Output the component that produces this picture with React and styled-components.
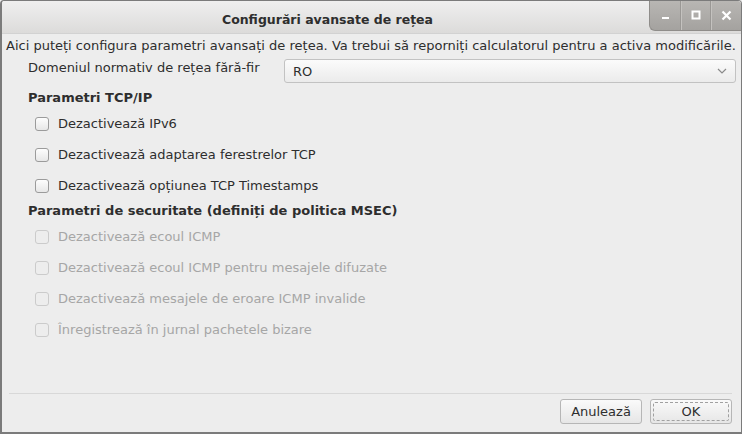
import React from "react";
import styled, { createGlobalStyle } from "styled-components";

const Global = createGlobalStyle`
  html, body { margin: 0; padding: 0; background: #ededed; }
  body { font-family: "DejaVu Sans", "Noto Sans", sans-serif; font-size: 13px; color: #2e3436; }
  * { box-sizing: border-box; }
`;

const Window = styled.div`
  width: 742px;
  height: 434px;
  display: flex;
  flex-direction: column;
  background: #ededed;
  border: 1px solid #7b7b7b;
  border-left-width: 2px;
  border-bottom-width: 2px;
  border-radius: 4px 4px 0 0;
  overflow: hidden;
`;

const TitleBar = styled.div`
  height: 33px;
  display: flex;
  align-items: flex-start;
  background: linear-gradient(#efefef, #dcdbda);
  border-bottom: 1px solid #d2d2d2;
  flex-shrink: 0;
`;

const Title = styled.div`
  flex: 1;
  height: 33px;
  display: flex;
  align-items: center;
  justify-content: center;
  font-weight: bold;
  font-size: 12.5px;
  color: #2e2e2e;
  padding-top: 3px;
  padding-left: 4px;
`;

const Controls = styled.div`
  display: flex;
  height: 31px;
  margin-top: -1px;
  background: linear-gradient(#b9b7b4, #a4a29f);
  border-left: 1px solid #8f8d8a;
  border-bottom: 1px solid #8f8d8a;
  border-bottom-left-radius: 6px;
  overflow: hidden;
`;

const CtlButton = styled.div`
  width: ${(p) => p.$w}px;
  height: 100%;
  display: flex;
  align-items: center;
  justify-content: center;
  border-left: ${(p) => (p.$first ? "none" : "1px solid #9a9895")};
  box-shadow: ${(p) => (p.$first ? "none" : "inset 1px 0 0 #c4c2bf")};
`;

const Body = styled.div`
  flex: 1;
  display: flex;
  flex-direction: column;
  padding: 2px 5px 0 4px;
`;

const Desc = styled.div`
  height: 20px;
  line-height: 20px;
  white-space: nowrap;
  color: #2e2e2e;
`;

const DomainRow = styled.div`
  display: flex;
  align-items: flex-start;
  margin-top: 3px;
  padding-left: 22px;
  height: 24px;
`;

const DomainLabel = styled.div`
  width: 256px;
  line-height: 16px;
  padding-top: 1px;
  color: #2e2e2e;
`;

const Select = styled.div`
  flex: 1;
  height: 24px;
  display: flex;
  align-items: center;
  justify-content: space-between;
  padding: 0 8px 0 8px;
  border: 1px solid #c2c2c2;
  border-radius: 3px;
  background: linear-gradient(#fbfbfb, #ebebeb);
  color: #2e2e2e;
`;

const SectionTitle = styled.div`
  height: 20px;
  line-height: 20px;
  padding-left: 22px;
  font-weight: bold;
  color: #2e2e2e;
  margin-top: ${(p) => p.$mt || 0}px;
`;

const Row = styled.label`
  height: 31px;
  display: flex;
  align-items: center;
  padding-left: 29px;
  color: ${(p) => (p.$disabled ? "#a6a6a6" : "#2e2e2e")};
`;

const Box = styled.span`
  width: 14px;
  height: 14px;
  border-radius: 3px;
  border: 1px solid ${(p) => (p.$disabled ? "#cbcbcb" : "#9b9b9b")};
  background: ${(p) =>
    p.$disabled ? "#ededed" : "linear-gradient(#fdfdfd, #e7e7e7)"};
  margin-right: 9px;
  flex-shrink: 0;
`;

const Footer = styled.div`
  margin-top: auto;
  display: flex;
  flex-direction: column;
  padding: 0 4px 8px 3px;
`;

const Separator = styled.div`
  height: 1px;
  background: #d8d8d8;
`;

const ButtonRow = styled.div`
  display: flex;
  justify-content: flex-end;
  gap: 8px;
  margin-top: 5px;
`;

const Button = styled.button`
  width: ${(p) => p.$w}px;
  height: 25px;
  font-family: "DejaVu Sans", sans-serif;
  font-size: 13px;
  color: #2e2e2e;
  border: 1px solid #b6b6b6;
  border-radius: 3px;
  background: linear-gradient(#fafafa, #e6e6e6);
  position: relative;
  padding: 0;
  ${(p) =>
    p.$focus &&
    `&::after {
      content: "";
      position: absolute;
      inset: 2px;
      border: 1px dashed #a0a0a0;
      border-radius: 2px;
    }`}
`;

const tcp = [
  "Dezactivează IPv6",
  "Dezactivează adaptarea ferestrelor TCP",
  "Dezactivează opțiunea TCP Timestamps",
];
const sec = [
  "Dezactivează ecoul ICMP",
  "Dezactivează ecoul ICMP pentru mesajele difuzate",
  "Dezactivează mesajele de eroare ICMP invalide",
  "Înregistrează în jurnal pachetele bizare",
];

export default function App() {
  return (
    <>
      <Global />
      <Window>
        <TitleBar>
          <Title>Configurări avansate de rețea</Title>
          <Controls>
            <CtlButton $w={30} $first>
              <svg width="10" height="10" viewBox="0 0 10 10">
                <rect x="2" y="7" width="7" height="2" fill="#fff" />
              </svg>
            </CtlButton>
            <CtlButton $w={30}>
              <svg width="10" height="10" viewBox="0 0 10 10">
                <rect x="1.5" y="1.5" width="7" height="7" fill="none" stroke="#fff" strokeWidth="2" />
              </svg>
            </CtlButton>
            <CtlButton $w={31}>
              <svg width="11" height="11" viewBox="0 0 11 11">
                <path d="M1.5 1.5 L9.5 9.5 M9.5 1.5 L1.5 9.5" stroke="#fff" strokeWidth="2.2" />
              </svg>
            </CtlButton>
          </Controls>
        </TitleBar>
        <Body>
          <Desc>
            Aici puteți configura parametri avansați de rețea. Va trebui să reporniți calculatorul pentru a activa modificările.
          </Desc>
          <DomainRow>
            <DomainLabel>Domeniul normativ de rețea fără-fir</DomainLabel>
            <Select>
              <span>RO</span>
              <svg width="10" height="6" viewBox="0 0 10 6">
                <path d="M1 1 L5 5 L9 1" fill="none" stroke="#8a8a8a" strokeWidth="1.2" />
              </svg>
            </Select>
          </DomainRow>
          <SectionTitle $mt={5}>Parametri TCP/IP</SectionTitle>
          {tcp.map((t) => (
            <Row key={t}>
              <Box />
              {t}
            </Row>
          ))}
          <SectionTitle>Parametri de securitate (definiți de politica MSEC)</SectionTitle>
          {sec.map((t) => (
            <Row key={t} $disabled>
              <Box $disabled />
              {t}
            </Row>
          ))}
          <Footer>
            <Separator />
            <ButtonRow>
              <Button $w={82}>Anulează</Button>
              <Button $w={82} $focus>OK</Button>
            </ButtonRow>
          </Footer>
        </Body>
      </Window>
    </>
  );
}
